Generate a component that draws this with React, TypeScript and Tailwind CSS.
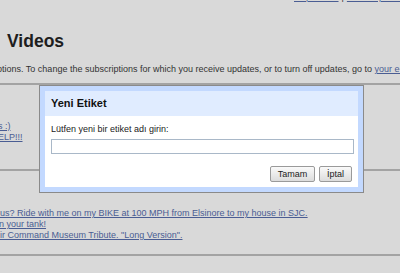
import React from "react";

const linkCls = "text-[#4a5d93] underline";

const App = () => {
  return (
    <div className="relative w-[400px] h-[273px] overflow-hidden bg-[#d9d9d9] font-['Liberation_Sans',Arial,sans-serif] text-[#222]">
      {/* page behind the dimmed overlay */}
      <div className="mt-[-8px] pl-[294px] whitespace-nowrap text-[9px] leading-[11px]">
        <a className={linkCls}>help center</a>
        <span className="mx-[3px] text-[#333]">|</span>
        <a className={linkCls}>e-mail options</a>
      </div>
      <h1 className="mt-[28px] pl-[7px] text-[17.5px] leading-[20px] font-bold text-[#1e1e1e]">Videos</h1>
      <p className="mt-[12px] ml-[-8px] whitespace-nowrap text-[9px] leading-[12px] text-[#333]">
        options. To change the subscriptions for which you receive updates, or to turn off updates, go to{" "}
        <a className={linkCls}>your e-mail options page</a>.
      </p>
      <div className="mt-[8px] h-[2px] bg-[#a3a3a3]" />
      <div className="h-[84px] pt-[36px] text-[9px] leading-[11px] whitespace-nowrap">
        <div className="ml-[-2px]"><a className={linkCls}>s :)</a></div>
        <div className="ml-[-2px]"><a className={linkCls}>ELP!!!</a></div>
      </div>
      <div className="h-[2px] bg-[#a3a3a3]" />
      <div className="pt-[37px] text-[9px] leading-[11px] whitespace-nowrap">
        <div><a className={linkCls}>us? Ride with me on my BIKE at 100 MPH from Elsinore to my house in SJC.</a></div>
        <div className="ml-[-1px]"><a className={linkCls}>n your tank!</a></div>
        <div><a className={linkCls}>ir Command Museum Tribute. "Long Version".</a></div>
      </div>
      <div className="mt-[13px] h-[2px] bg-[#a3a3a3]" />

      {/* modal dialog */}
      <div className="absolute left-[39px] top-[85px] w-[325px] border border-[#8a8a8a] bg-[#c3d9ff] p-[5px]">
        <div className="flex h-[25px] items-center bg-[#e0ecff] pl-[6px] text-[11px] font-bold text-[#111]">
          Yeni Etiket
        </div>
        <div className="h-[71px] bg-white pl-[6px] pr-[4px] pt-[7px]">
          <div className="text-[9px] leading-[12px] text-[#222]">Lütfen yeni bir etiket adı girin:</div>
          <input
            type="text"
            className="mt-[4px] block h-[15px] w-full border border-[#a9b8c8] bg-white outline-none"
          />
          <div className="mt-[12px] mr-[2px] flex justify-end gap-[4px]">
            <button className="h-[16px] w-[45px] rounded-[2px] border border-[#9a9a9a] bg-gradient-to-b from-[#fafafa] to-[#dcdcdc] text-[9px] leading-[14px] text-[#222]">
              Tamam
            </button>
            <button className="h-[16px] w-[33px] rounded-[2px] border border-[#9a9a9a] bg-gradient-to-b from-[#fafafa] to-[#dcdcdc] text-[9px] leading-[14px] text-[#222]">
              İptal
            </button>
          </div>
        </div>
      </div>
    </div>
  );
};

export default App;
